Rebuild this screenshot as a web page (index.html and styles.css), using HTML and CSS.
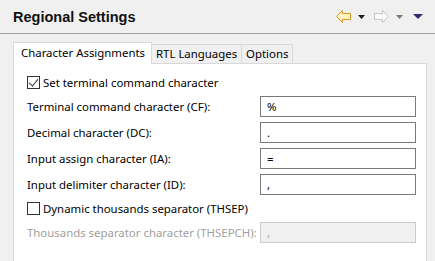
FILE: index.html
```html
<!DOCTYPE html>
<html>

<head>
    <meta name="viewport" content="width=device-width, initial-scale=1.0">
    <title>Regional Settings</title>
    <link rel="stylesheet" href="styles.css">
</head>

<body>

    <div class="header">
      <h1>Regional Settings</h1>
      <div class="tools">
        <svg class="arrow" width="15" height="13" viewBox="0 0 15 13">
          <polygon points="0.5,6.5 6.5,0.5 6.5,3.5 14.5,3.5 14.5,9.5 6.5,9.5 6.5,12.5" fill="#fff2c4" stroke="#d49a22"/>
        </svg>
        <svg class="drop" width="7" height="4" viewBox="0 0 7 4"><polygon points="0,0 7,0 3.5,4" fill="#1a1a1a"/></svg>
        <svg class="arrow" width="15" height="13" viewBox="0 0 15 13">
          <polygon points="14.5,6.5 8.5,0.5 8.5,3.5 0.5,3.5 0.5,9.5 8.5,9.5 8.5,12.5" fill="#fafafa" stroke="#c4c4c4"/>
        </svg>
        <svg class="drop" width="7" height="4" viewBox="0 0 7 4"><polygon points="0,0 7,0 3.5,4" fill="#7a7a7a"/></svg>
        <svg class="menu" width="10" height="5" viewBox="0 0 10 5"><polygon points="0,0 10,0 5,5" fill="#3a2770"/></svg>
      </div>
    </div>

    <div class="tabs">
      <div class="tab active">Character Assignments</div>
      <div class="tab">RTL Languages</div>
      <div class="tab">Options</div>
    </div>

    <div class="panel">
      <label class="check-row"><span class="box checked"></span>Set terminal command character</label>

      <div class="row"><span>Terminal command character (CF):</span><div class="field">%</div></div>
      <div class="row"><span>Decimal character (DC):</span><div class="field">.</div></div>
      <div class="row"><span>Input assign character (IA):</span><div class="field">=</div></div>
      <div class="row"><span>Input delimiter character (ID):</span><div class="field">,</div></div>

      <label class="check-row"><span class="box"></span>Dynamic thousands separator (THSEP)</label>

      <div class="row disabled"><span>Thousands separator character (THSEPCH):</span><div class="field">,</div></div>
    </div>

</body>

</html>
```
FILE: styles.css
```css
body {
    margin: 0;
    background: #f0f0f0;
    font-family: "Noto Sans", "Open Sans", sans-serif;
    font-size: 11.4px;
    color: #000;
    overflow: hidden;
}

.header {
    height: 33px;
    display: flex;
    align-items: center;
    padding: 0 12px 0 13px;
    border-bottom: 1px solid #a0a0a0;
}

.header h1 {
    margin: 0;
    flex-grow: 1;
    font-family: "Liberation Sans", Arial, sans-serif;
    font-size: 14.5px;
    font-weight: 700;
    color: #111;
}

.tools {
    display: flex;
    align-items: center;
}

.arrow {
    display: block;
}

.drop {
    display: block;
    margin: 0 9px 0 7px;
}

.menu {
    display: block;
    margin-left: 1px;
}

.tabs {
    display: flex;
    align-items: flex-end;
    margin: 7px 0 0 13px;
    height: 22px;
}

.tab {
    height: 19px;
    line-height: 18px;
    padding: 0 4px;
    background: #f0f0f0;
    border: 1px solid #d9d9d9;
    border-bottom: none;
    border-left: none;
    box-sizing: border-box;
    white-space: nowrap;
}

.tab.active {
    height: 22px;
    line-height: 19px;
    background: #fff;
    border-left: 1px solid #d9d9d9;
    margin-bottom: -1px;
    position: relative;
    padding: 0 6px 0 7px;
}

.panel {
    margin: 0 8px 0 13px;
    height: 198px;
    box-sizing: border-box;
    background: #fff;
    border: 1px solid #d9d9d9;
    border-bottom: none;
    padding: 10px 10px 0 13px;
    display: flex;
    flex-direction: column;
    gap: 5px;
    overflow: hidden;
}

.check-row {
    height: 17px;
    display: flex;
    align-items: center;
    white-space: nowrap;
}

.box {
    width: 13px;
    height: 13px;
    box-sizing: border-box;
    border: 1px solid #333;
    margin-right: 3px;
    background: #fff;
    position: relative;
}

.box.checked::after {
    content: "";
    position: absolute;
    left: 3px;
    top: 0px;
    width: 4px;
    height: 8px;
    border: solid #333;
    border-width: 0 1px 1px 0;
    transform: rotate(40deg);
}

.row {
    height: 21px;
    flex-shrink: 0;
    display: grid;
    grid-template-columns: 233px 156px;
    align-items: center;
    white-space: nowrap;
}

.field {
    height: 21px;
    box-sizing: border-box;
    border: 1px solid #7a7a7a;
    padding: 0 6px;
    line-height: 19px;
    background: #fff;
}

.disabled {
    color: #a0a0a0;
}

.disabled .field {
    background: #f0f0f0;
    border-color: #cccccc;
}
```
